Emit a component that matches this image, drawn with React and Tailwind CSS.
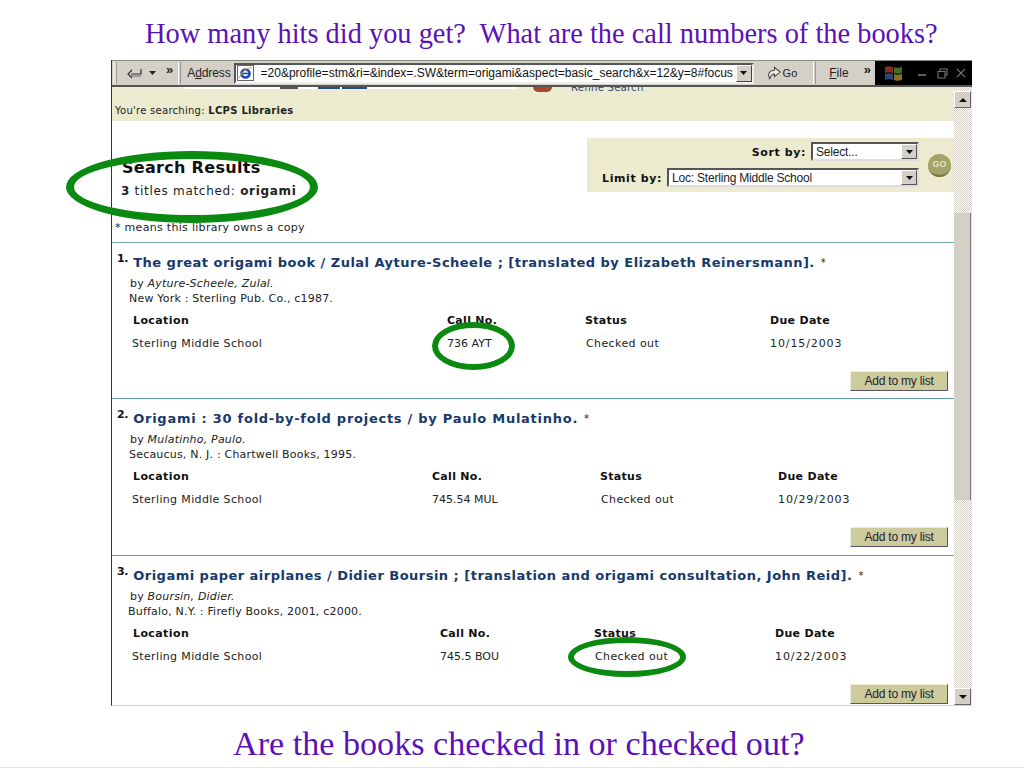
import React from 'react';

const sans = "font-['DejaVu_Sans',sans-serif]";
const arial = "font-['Liberation_Sans',Arial,sans-serif]";

const books = [
  {
    num: '1.',
    title: 'The great origami book / Zulal Ayture-Scheele ; [translated by Elizabeth Reinersmann].',
    titleClass: 'tracking-[0.48px]',
    author: 'Ayture-Scheele, Zulal.',
    pub: 'New York : Sterling Pub. Co., c1987.',
    pubClass: 'pl-[12px]',
    cols: 'grid-cols-[314px_138px_185px_1fr]',
    call: '736 AYT',
    due: '10/15/2003',
    height: 'h-[156px] shrink-0 border-b border-[#5f9ea6]',
  },
  {
    num: '2.',
    title: 'Origami : 30 fold-by-fold projects / by Paulo Mulatinho.',
    titleClass: 'tracking-[0.73px]',
    author: 'Mulatinho, Paulo.',
    pub: 'Secaucus, N. J. : Chartwell Books, 1995.',
    pubClass: 'pl-[12px]',
    cols: 'grid-cols-[299px_168px_178px_1fr]',
    call: '745.54 MUL',
    due: '10/29/2003',
    height: 'h-[157px] shrink-0 border-b border-[#5f9ea6]',
  },
  {
    num: '3.',
    title: 'Origami paper airplanes / Didier Boursin ; [translation and origami consultation, John Reid].',
    titleClass: 'tracking-[0.48px]',
    author: 'Boursin, Didier.',
    pub: 'Buffalo, N.Y. : Firefly Books, 2001, c2000.',
    pubClass: 'pl-[11px]',
    cols: 'grid-cols-[307px_154px_181px_1fr]',
    call: '745.5 BOU',
    due: '10/22/2003',
    height: 'flex-1 min-h-0',
  },
];

const checker = 'bg-[conic-gradient(#d4d0c8_25%,#fff_0_50%,#d4d0c8_0_75%,#fff_0)] bg-[length:2px_2px]';

const DropArrow = () => (
  <svg width="7" height="4" viewBox="0 0 7 4"><path d="M0 0h7L3.5 4z" fill="#111" /></svg>
);

const SelectBox = ({ className, children }) => (
  <div className={`h-[19px] bg-white border-2 border-t-[#555] border-l-[#555] border-r-[#ddd] border-b-[#ddd] flex items-center justify-between ${className}`}>
    <span className={`${arial} text-[12px] text-[#222] pl-[3px] tracking-[-0.2px] whitespace-nowrap`}>{children}</span>
    <span className="w-[16px] h-[15px] bg-[#d4d0c8] border border-t-white border-l-white border-r-[#555] border-b-[#555] flex items-center justify-center">
      <DropArrow />
    </span>
  </div>
);

const Toolbar = () => (
  <div className={`${arial} h-[27px] shrink-0 flex items-center bg-[#d4d0c8] border-t border-[#888] border-b-2 border-b-[#555] text-[12px] text-[#222]`}>
    <div className="w-[4px] h-[22px] border-r border-[#999] bg-[#e4e2dc] ml-[1px] mr-[10px]" />
    <svg width="15" height="11" viewBox="0 0 15 11" fill="none" stroke="#333" strokeWidth="1.2">
      <path d="M14 1v5H4M5 2 1 6l4 4" />
      <path d="M4 8h10" stroke="#777" />
    </svg>
    <svg className="ml-[7px]" width="7" height="4" viewBox="0 0 7 4"><path d="M0 0h7L3.5 4z" fill="#222" /></svg>
    <span className="ml-[10px] mb-[7px] text-[13px] font-bold leading-none">»</span>
    <div className="ml-[5px] w-[3px] h-[22px] border-x border-l-white border-r-[#999]" />
    <span className="ml-[6px] tracking-[-0.1px]">A<span className="underline">d</span>dress</span>
    <div className="ml-[3px] w-[520px] h-[21px] bg-white border-2 border-t-[#555] border-l-[#555] border-r-[#eee] border-b-[#eee] flex items-center">
      <svg className="ml-[1px] shrink-0" width="17" height="16" viewBox="0 0 17 16">
        <rect x="0.5" y="0.5" width="16" height="15" fill="#fff" stroke="#666" />
        <circle cx="8.5" cy="8.5" r="4" fill="none" stroke="#1c45c0" strokeWidth="2.6" />
        <path d="M4 8.5h9" stroke="#1c45c0" strokeWidth="1.6" />
        <path d="M2 13C6 6 11 2 15 3" fill="none" stroke="#d8a428" strokeWidth="1.1" />
      </svg>
      <span className="ml-[7px] flex-1 text-[12px] text-[#111] whitespace-nowrap overflow-hidden">=20&amp;profile=stm&amp;ri=&amp;index=.SW&amp;term=origami&amp;aspect=basic_search&amp;x=12&amp;y=8#focus</span>
      <span className="w-[16px] h-[17px] shrink-0 bg-[#d4d0c8] border border-t-white border-l-white border-r-[#444] border-b-[#444] flex items-center justify-center">
        <DropArrow />
      </span>
    </div>
    <svg className="ml-[12px]" width="16" height="16" viewBox="0 0 17 16" fill="none" stroke="#444" strokeWidth="1.1">
      <path d="M4 14C1 9 4 5 9 5V2l6 5-6 5V9C6 9 5 11 4 14z" fill="#eef0e8" />
    </svg>
    <span className="ml-px text-[11px]">Go</span>
    <div className="ml-[16px] w-[3px] h-[22px] border-x border-l-white border-r-[#999]" />
    <span className="ml-[13px]"><span className="underline">F</span>ile</span>
    <span className="ml-[15px] mb-[7px] text-[13px] font-bold leading-none">»</span>
    <div className="ml-auto w-[97px] h-full bg-black flex items-center">
      <svg className="ml-[9px] opacity-70" width="20" height="18" viewBox="0 0 20 18">
        <path d="M1 3c2-1 5-1 8 0v6C6 8 3 8 1 9z" fill="#b5492f" />
        <path d="M10 3c2 1 5 1 8 0v6c-3 1-6 1-8 0z" fill="#5f9a3c" />
        <path d="M1 10c2-1 5-1 8 0v6c-3-1-6-1-8 0z" fill="#3c62a8" />
        <path d="M10 10c2 1 5 1 8 0v6c-3 1-6 1-8 0z" fill="#c8a030" />
      </svg>
      <svg className="ml-[14px]" width="9" height="9" viewBox="0 0 9 9"><path d="M0 6h8" stroke="#777" strokeWidth="1.6" /></svg>
      <svg className="ml-[10px]" width="11" height="11" viewBox="0 0 11 11" fill="none" stroke="#777" strokeWidth="1.1">
        <path d="M3 3V1h7v6H8M1 3.5h7v6.5H1z" />
      </svg>
      <svg className="ml-[8px]" width="10" height="10" viewBox="0 0 11 11" stroke="#777" strokeWidth="1.4">
        <path d="m1 1 9 9M10 1l-9 9" />
      </svg>
    </div>
  </div>
);

const Scrollbar = () => (
  <div className={`w-[18px] shrink-0 flex flex-col ${checker}`}>
    <div className="h-[17px] mt-[4px] mr-px bg-[#d4d0c8] border border-t-white border-l-white border-r-[#666] border-b-[#666] flex items-center justify-center">
      <svg width="8" height="4" viewBox="0 0 8 4"><path d="M0 4h8L4 0z" fill="#111" /></svg>
    </div>
    <div className="h-[105px]" />
    <div className="h-[287px] mr-px bg-[#d4d0c8] border-r border-[#777]" />
    <div className="flex-1" />
    <div className="h-[17px] mr-px bg-[#d4d0c8] border border-t-white border-l-white border-r-[#666] border-b-[#666] flex items-center justify-center">
      <svg width="8" height="4" viewBox="0 0 8 4"><path d="M0 0h8L4 4z" fill="#111" /></svg>
    </div>
  </div>
);

const Book = ({ book }) => (
  <div className={`pl-[5px] ${book.height}`}>
    <div className="flex items-start pt-[10px] h-[30px]">
      <span className="text-[11px] font-bold leading-none text-[#111] tracking-[-0.3px]">{book.num}</span>
      <span className={`ml-[5px] mt-[2px] text-[13px] font-bold leading-[16px] text-[#17396b] whitespace-nowrap ${book.titleClass}`}>{book.title}</span>
      <span className="ml-[6px] mt-[3px] text-[10px] leading-[14px] text-[#222]">*</span>
    </div>
    <div className="pl-[13px] mt-[3px] text-[11px] leading-[15px] text-[#222] tracking-[0.2px]">
      by <i>{book.author}</i>
    </div>
    <div className={`${book.pubClass} text-[11px] leading-[15px] text-[#222] whitespace-nowrap tracking-[0.2px]`}>{book.pub}</div>
    <div className={`grid ${book.cols} pl-[16px] mt-[7px] text-[11px]`}>
      <div className="font-bold text-[#111] h-[23px] leading-[16px] tracking-[0.4px]">Location</div>
      <div className="font-bold text-[#111] h-[23px] leading-[16px] tracking-[0.3px]">Call No.</div>
      <div className="font-bold text-[#111] h-[23px] leading-[16px] tracking-[0.3px]">Status</div>
      <div className="font-bold text-[#111] h-[23px] leading-[16px] tracking-[0.3px]">Due Date</div>
      <div className="-ml-px text-[#222] leading-[16px] tracking-[0.35px]">Sterling Middle School</div>
      <div className="text-[#222] leading-[16px]">{book.call}</div>
      <div className="pl-px text-[#222] leading-[16px] tracking-[0.4px]">Checked out</div>
      <div className="text-[#222] leading-[16px] tracking-[0.9px]">{book.due}</div>
    </div>
    <div className="flex justify-end pr-[6px] mt-[19px]">
      <button className={`${arial} w-[98px] h-[20px] bg-[#cdcb9b] border border-[#eeeedd] border-r-[#556] border-b-[#556] text-[12px] text-[#223] tracking-[-0.2px]`}>
        Add to my list
      </button>
    </div>
  </div>
);

const Ring = ({ className }) => (
  <div className={`absolute rounded-[50%] border-[#0a8a10] pointer-events-none ${className}`} />
);

export default function App() {
  return (
    <div className="relative w-[1024px] h-[768px] bg-white overflow-hidden flex flex-col font-['Liberation_Serif',serif] text-[#5a12b8]">
      <div className="h-[60px] shrink-0 pl-[145px] pt-[16px] text-[28.4px] leading-[36px] whitespace-pre">How many hits did you get?  What are the call numbers of the books?</div>

      <div className={`${sans} ml-[111px] w-[861px] h-[646px] shrink-0 flex flex-col border-l border-[#333] border-b border-b-[#ccc]`}>
        <Toolbar />
        <div className="flex flex-1 min-h-0">
          <div className="flex-1 min-w-0 flex flex-col overflow-hidden">
            {/* banner, its upper part is scrolled away under the toolbar */}
            <div className="relative h-[34px] shrink-0 overflow-hidden bg-[#ecebcf] pl-[3px] pt-[17px] text-[10px] leading-[14px] text-[#222] tracking-[0.27px]">
              You're searching: <b>LCPS Libraries</b>
              <div className="absolute top-0 left-[73px] w-[333px] h-[2px] bg-white" />
              <div className="absolute top-0 left-[168px] w-[18px] h-[2px] bg-[#555]" />
              <div className="absolute top-0 left-[206px] w-[22px] h-[2px] bg-[#2b4a8a]" />
              <div className="absolute top-0 left-[230px] w-[25px] h-[2px] bg-[#2b4a8a]" />
              <div className="absolute top-0 left-[421px] w-[19px] h-[5px] rounded-b-full bg-[#a5492f]" />
              <div className="absolute -top-[4px] left-[459px] text-[10px] leading-none text-[#2b4a7a]">Refine Search</div>
            </div>
            <div className="h-[122px] shrink-0 flex justify-between pl-[11px] pt-[17px] border-b border-[#6fa5ab]">
              <div className="pt-[20px]">
                <div className="-ml-px text-[16px] font-bold leading-[20px] text-[#111] tracking-[0.3px]">Search Results</div>
                <div className="-ml-[2px] mt-[3px] text-[12px] leading-[20px] text-[#222] tracking-[0.7px]"><b>3</b> titles matched: <b>origami</b></div>
                <div className="-ml-[8px] mt-[20px] text-[11px] leading-[14px] text-[#222] tracking-[0.3px]">* means this library owns a copy</div>
              </div>
              <div className="w-[367px] h-[54px] bg-[#ecebcf] flex flex-col items-end pr-[35px] pt-[4px] gap-[7px]">
                <div className="flex items-center gap-[5px]">
                  <span className="translate-y-[2px] text-[11px] font-bold text-[#111] tracking-[0.6px]">Sort by:</span>
                  <SelectBox className="w-[108px]">Select...</SelectBox>
                </div>
                <div className="flex items-center gap-[5px]">
                  <span className="translate-y-[2px] text-[11px] font-bold text-[#111] tracking-[0.6px]">Limit by:</span>
                  <SelectBox className="w-[252px]">Loc: Sterling Middle School</SelectBox>
                </div>
              </div>
            </div>
            {books.map((b) => (
              <Book key={b.num} book={b} />
            ))}
          </div>
          <Scrollbar />
        </div>
      </div>

      <div className="pl-[233px] pt-[18px] text-[34.15px] leading-[40px] whitespace-nowrap">Are the books checked in or checked out?</div>
      <div className="absolute left-0 right-0 bottom-0 h-px bg-[#e2e2e2]" />

      {/* green circles drawn over the screenshot */}
      <Ring className="left-[66px] top-[151px] w-[252px] h-[72px] border-[8px]" />
      <Ring className="left-[432px] top-[322px] w-[83px] h-[48px] border-[6px]" />
      <Ring className="left-[568px] top-[637px] w-[118px] h-[40px] border-[6px]" />

      {/* GO button sits on the limit panel */}
      <div className={`${arial} absolute left-[928px] top-[154px] w-[23px] h-[23px] rounded-full bg-[#a3a36a] border-b-2 border-[#77773f] flex items-center justify-center text-[9px] font-bold text-[#e2e2c4]`}>GO</div>
    </div>
  );
}
